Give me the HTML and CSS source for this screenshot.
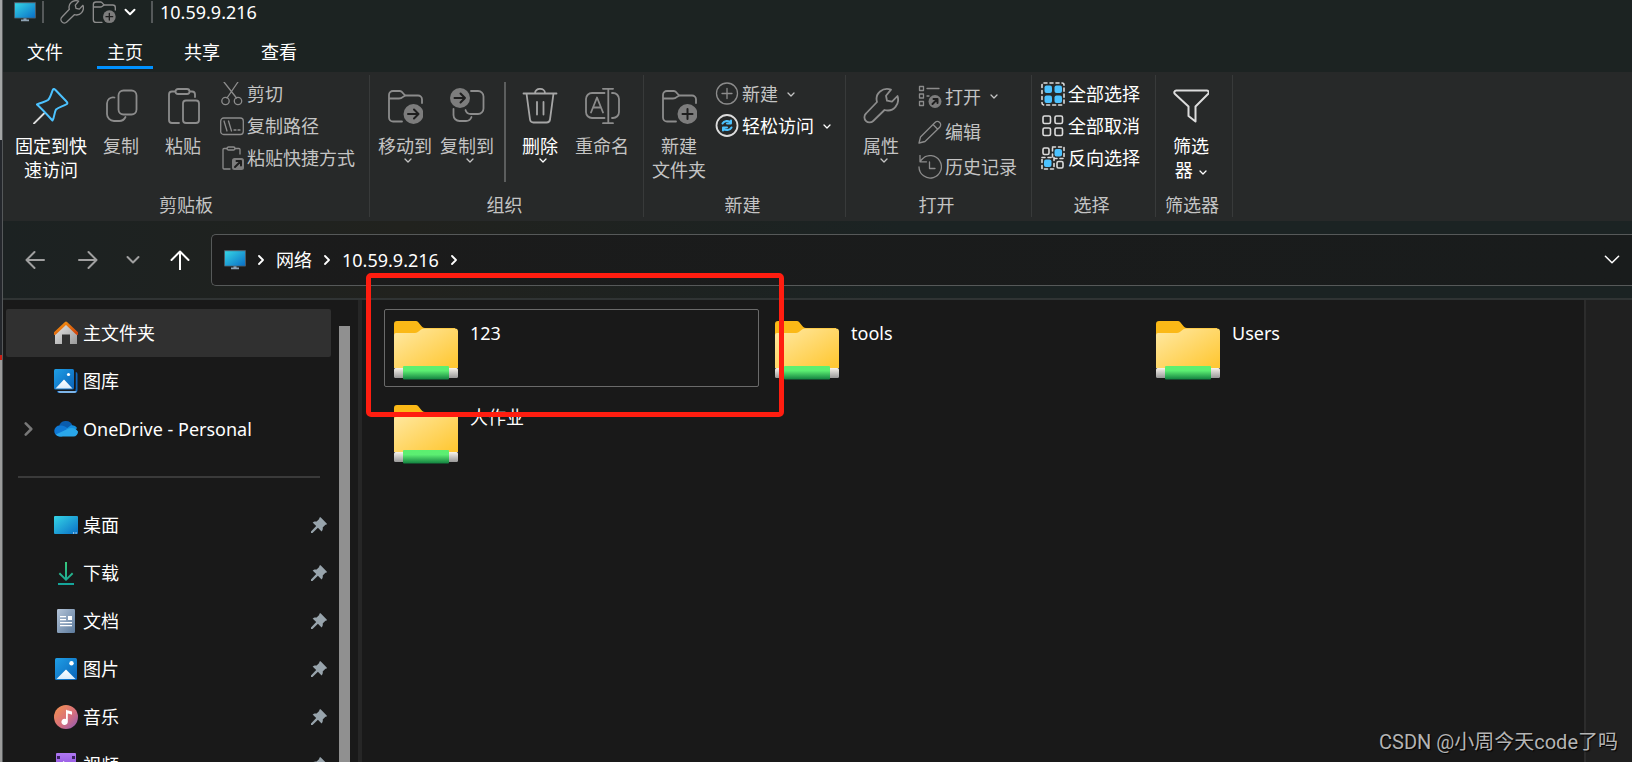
FILE: index.html
```html
<!DOCTYPE html>
<html lang="zh-CN">
<head>
<meta charset="utf-8">
<title>10.59.9.216</title>
<link rel="stylesheet" href="styles.css">
</head>
<body>
<svg class="sprite" width="0" height="0" aria-hidden="true">
  <defs>
    <linearGradient id="g-screen" x1="0" y1="0" x2="1" y2="1"><stop offset="0" stop-color="#35d5e6"/><stop offset="1" stop-color="#0a6fc6"/></linearGradient>
    <linearGradient id="g-folder" x1="0" y1="0" x2="1" y2="1"><stop offset="0" stop-color="#ffe9a4"/><stop offset="1" stop-color="#ffc62e"/></linearGradient>
    <linearGradient id="g-green" x1="0" y1="0" x2="0" y2="1"><stop offset="0" stop-color="#5cf070"/><stop offset=".35" stop-color="#5cee72"/><stop offset="1" stop-color="#128040"/></linearGradient>
    <linearGradient id="g-pipe" x1="0" y1="0" x2="0" y2="1"><stop offset="0" stop-color="#f8f4ec"/><stop offset="1" stop-color="#989898"/></linearGradient>
    <linearGradient id="g-roof" x1="0" y1="0" x2="1" y2="1"><stop offset="0" stop-color="#f59a12"/><stop offset="1" stop-color="#d2440c"/></linearGradient>
    <linearGradient id="g-wall" x1="0" y1="0" x2="1" y2="1"><stop offset="0" stop-color="#e8e8e8"/><stop offset="1" stop-color="#9a9a9a"/></linearGradient>
    <linearGradient id="g-pic" x1="0" y1="0" x2="1" y2="1"><stop offset="0" stop-color="#1f9fe6"/><stop offset="1" stop-color="#0a62b8"/></linearGradient>
    <linearGradient id="g-snow" x1="0" y1="0" x2="0" y2="1"><stop offset="0" stop-color="#ffffff"/><stop offset="1" stop-color="#d8ebfb"/></linearGradient>
    <linearGradient id="g-down" x1="0" y1="0" x2="0" y2="1"><stop offset="0" stop-color="#38c87c"/><stop offset="1" stop-color="#14a49c"/></linearGradient>
    <linearGradient id="g-doc" x1="0" y1="0" x2="1" y2="1"><stop offset="0" stop-color="#b4c4d8"/><stop offset="1" stop-color="#5c7a9c"/></linearGradient>
    <linearGradient id="g-music" x1="0" y1="0" x2="1" y2="1"><stop offset="0" stop-color="#f5944c"/><stop offset=".55" stop-color="#d8707c"/><stop offset="1" stop-color="#8c58b8"/></linearGradient>
    <linearGradient id="g-video" x1="0" y1="0" x2="0" y2="1"><stop offset="0" stop-color="#b078f4"/><stop offset="1" stop-color="#7c3cd0"/></linearGradient>
  </defs>
  <symbol id="monitor" viewBox="0 0 22 20"><path d="M7 17.500h8v1.800H7zM9.500 15.500h3v2.500h-3z" fill="#8fa3b4"/><rect width="22" height="16.500" rx="1" fill="#4a5a66"/><rect x="1" y="1.200" width="20" height="14.500" fill="url(#g-screen)"/></symbol>
  <symbol id="wrench" viewBox="0 0 36 36"><path d="M28 1.600C20-1 11.500 5 14 14L3 25.500a5 5 0 0 0 7.200 7.500L21.500 22C31 24.500 37 16 34.500 8L29 13.700l-5-1-1-5z"/></symbol>
  <symbol id="folder" viewBox="0 0 36 36"><path d="M15 33.500H6a4 4 0 0 1-4-4V7a4 4 0 0 1 4-4h7c3 0 3.500 4.500 6 4.500h12a4 4 0 0 1 4 4V15M2 10.500h10c4 0 4-3 7-3"/></symbol>
  <symbol id="chev" viewBox="0 0 8 5"><path d="M1 1l3 3 3-3"/></symbol>
  <symbol id="chev-right" viewBox="0 0 6 10"><path d="M1 1l4 4-4 4"/></symbol>
  <symbol id="pin" viewBox="0 0 16 16"><path d="M9.600.3L15.700 6.400c.5.900-.2 1.500-1.300 1.400l-2.700 2.700c.3 1.500 0 3-1.100 4L6.900 10.800 1.500 16 0 16l0-1.500L5.200 9.100 1.600 5.600C2.600 4.400 4.200 4.200 5.600 4.500l2.600-2.600C8.200.8 8.700-.2 9.600.3z" fill="#98a4ac"/></symbol>
  <symbol id="share-folder" viewBox="0 0 64 59"><path d="M0 3a3 3 0 0 1 3-3h19c3 0 5 7 9 7h30v8H0z" fill="#fbb917"/><path d="M0 14a2 2 0 0 1 2-2h19c4 0 5-4.500 9-4.500h31a3 3 0 0 1 3 3V47H0z" fill="url(#g-folder)"/><rect y="47" width="64" height="10" rx="1.500" fill="url(#g-pipe)"/><rect x="9" y="45" width="46" height="13.500" rx="1" fill="url(#g-green)"/></symbol>
</svg>

<div class="desktop">
<div class="backdrop"></div>
<main class="window">
  <header class="titlebar">
    <svg class="monitor"><use href="#monitor"/></svg>
    <span class="bar"></span>
    <button class="quick quick-first" aria-label="属性"><svg class="ico24 dim"><use href="#wrench"/></svg></button>
    <button class="quick" aria-label="新建文件夹"><svg class="ico24 dim" viewBox="0 0 36 36"><use href="#folder"/><circle cx="26" cy="25" r="9.500" class="badge"/><path d="M26 20v10M21 25h10" class="cut"/></svg></button>
    <button class="quick" aria-label="自定义"><svg class="chev-lg bright"><use href="#chev"/></svg></button>
    <span class="bar bar-last"></span>
    <h1 class="title">10.59.9.216</h1>
  </header>

  <nav class="tabs">
    <button class="tab tab-file">文件</button>
    <button class="tab tab-active">主页</button>
    <button class="tab">共享</button>
    <button class="tab">查看</button>
  </nav>

  <section class="ribbon">
    <div class="group group-clip">
      <div class="tools">
        <button class="big big-wide on">
          <svg class="ico36" viewBox="0 0 36 36"><path d="M1 35.500L11 25.500" stroke="#ddd"/><path d="M20 1.500c-1.500 3-2.500 8-5 10.500-3 2-7 2.500-11 4.500C9 21 14 26.500 19.500 32.500c2-3 1.500-7.500 3.500-11 3-2.500 6.500-3 11-5.500.8-1 .3-1.700-.5-2.500L22.500 2C21.500 1 20.600.6 20 1.500z" stroke="#4cc2ff" stroke-width="2"/></svg>
          <span>固定到快速访问</span></button>
        <button class="big">
          <svg class="ico36" viewBox="0 0 36 36"><rect x="15.500" y="2.500" width="18" height="24" rx="5"/><path d="M11.500 9.500a6 6 0 0 0-7.500 6V26a7 7 0 0 0 7 7h5a7 7 0 0 0 6.500-4"/></svg>
          <span>复制</span></button>
        <button class="big">
          <svg class="ico36" viewBox="0 0 36 36"><rect x="10.500" y="1" width="14" height="5" rx="2.500"/><path d="M10 3.500H7a3 3 0 0 0-3 3V32a3 3 0 0 0 3 3h7M25 3.500h2a3 3 0 0 1 3 3V9"/><rect x="18" y="12.500" width="16" height="22.500" rx="3"/></svg>
          <span>粘贴</span></button>
        <div class="stack">
          <button class="small"><svg class="ico24 thin" viewBox="0 0 24 24"><path d="M4 0l12.500 16M18 0L7 16"/><circle cx="5.500" cy="19" r="3.700"/><circle cx="18" cy="19" r="3.700"/></svg>剪切</button>
          <button class="small"><svg class="ico24 thin" viewBox="0 0 24 24"><rect x=".7" y="4" width="22.600" height="16.500" rx="3"/><path d="M4 7l3 10M8.500 7l3 10M14 16h2M18 16h2"/></svg>复制路径</button>
          <button class="small"><svg class="ico24 thin" viewBox="0 0 24 24"><rect x="7" y="1" width="8" height="3" rx="1.500"/><path d="M7 2.500H4a1 1 0 0 0-1 1V22a1 1 0 0 0 1 1h6M15 2.500h4a1 1 0 0 1 1 1V8"/><rect x="12" y="12" width="12" height="12" rx="2.500" class="badge"/><path d="M15 21l6-6M16.500 15H21v4.500" class="cut"/></svg>粘贴快捷方式</button>
        </div>
      </div>
      <h2 class="caption">剪贴板</h2>
    </div>

    <div class="group group-org">
      <div class="tools">
        <button class="big">
          <svg class="ico36" viewBox="0 0 36 36"><use href="#folder"/><circle cx="26.500" cy="26" r="10" class="badge"/><path d="M21 26h10.500M27 21.500l4.500 4.500-4.500 4.500" class="cut"/></svg>
          <span>移动到</span><svg class="chev"><use href="#chev"/></svg></button>
        <button class="big">
          <svg class="ico36" viewBox="0 0 36 36"><path d="M22 3h7a5.500 5.500 0 0 1 5.500 5.500v12A5.500 5.500 0 0 1 29 26h-7a5.500 5.500 0 0 1-5.500-4M4.500 21v6a6 6 0 0 0 6 6h6a6 6 0 0 0 6-4"/><circle cx="11" cy="10" r="10" class="badge"/><path d="M5.500 10H16M11.500 5.500L16 10l-4.500 4.500" class="cut"/></svg>
          <span>复制到</span><svg class="chev"><use href="#chev"/></svg></button>
        <span class="divider"></span>
        <button class="big on">
          <svg class="ico36 mid" viewBox="0 0 36 36"><path d="M1.500 5.500h33M13 5c0-5.500 10-5.500 10 0M4.500 5.500l3.500 26a3.500 3.500 0 0 0 3.500 3h13a3.500 3.500 0 0 0 3.500-3l3.500-26M15 14v12.500M21.500 14v12.500"/></svg>
          <span>删除</span><svg class="chev"><use href="#chev"/></svg></button>
        <button class="big">
          <svg class="ico36" viewBox="0 0 36 36"><path d="M20.500 5H8a6 6 0 0 0-6 6v13a6 6 0 0 0 6 6h12.500M28 5h1a6 6 0 0 1 6 6v13a6 6 0 0 1-6 6h-1M19 .8h10M19 35.200h10M24.300 1v34M7 24.500l6-15 6 15M9 19.500h8"/></svg>
          <span>重命名</span></button>
      </div>
      <h2 class="caption">组织</h2>
    </div>

    <div class="group group-new">
      <div class="tools">
        <button class="big">
          <svg class="ico36" viewBox="0 0 36 36"><use href="#folder"/><circle cx="26.500" cy="26" r="10" class="badge"/><path d="M26.500 21v10M21.500 26h10" class="cut"/></svg>
          <span>新建<br>文件夹</span></button>
        <div class="stack stack-near">
          <button class="small"><svg class="ico24 thin" viewBox="0 0 24 24"><circle cx="12" cy="11.500" r="10.500"/><path d="M12 6.500v10M7 11.500h10"/></svg>新建<svg class="chev"><use href="#chev"/></svg></button>
          <button class="small on"><svg class="ico24" viewBox="0 0 24 24"><circle cx="12" cy="11.500" r="10.500" stroke="#ddd"/><path d="M7.500 9.500c1.500-3 6-3.500 8.500-1V6.500M16 9.500h-4M16.500 13.500c-1.500 3-6 3.500-8.500 1v2M8 13.500h4" stroke="#4cc2ff" stroke-width="2"/></svg>轻松访问<svg class="chev"><use href="#chev"/></svg></button>
        </div>
      </div>
      <h2 class="caption">新建</h2>
    </div>

    <div class="group group-open">
      <div class="tools">
        <button class="big">
          <svg class="ico36"><use href="#wrench"/></svg>
          <span>属性</span><svg class="chev"><use href="#chev"/></svg></button>
        <div class="stack stack-loose">
          <button class="small"><svg class="ico24 thin" viewBox="0 0 24 24"><rect x="1.500" y="1.500" width="4" height="4"/><rect x="1.500" y="9" width="4" height="4"/><rect x="1.500" y="16.500" width="4" height="4"/><path d="M9 3.500h12M9 11h2"/><circle cx="17" cy="16.500" r="6.500" class="badge"/><path d="M14.500 19l5-5M15.500 14h4v4" class="cut"/></svg>打开<svg class="chev"><use href="#chev"/></svg></button>
          <button class="small"><svg class="ico24 thin" viewBox="0 0 24 24"><path d="M1 23l1.500-6L17 2.500a3.300 3.300 0 0 1 4.700 4.700L7 21.500zM15 4.500l4.700 4.700"/></svg>编辑</button>
          <button class="small"><svg class="ico24 thin" viewBox="0 0 24 24"><path d="M1 12a11.200 11.200 0 1 0 3-7.800L2 6.500M2 .5v6.300h6.500M11.500 7v6.500H17"/></svg>历史记录</button>
        </div>
      </div>
      <h2 class="caption">打开</h2>
    </div>

    <div class="group group-select">
      <div class="tools">
        <div class="stack stack-near">
          <button class="small on"><svg class="ico24" viewBox="0 0 24 24"><rect x="1" y="1" width="22" height="22" rx="2" class="dash"/><g class="blue"><rect x="3.500" y="3.500" width="7.500" height="7.500" rx="2"/><rect x="13.500" y="3.500" width="7.500" height="7.500" rx="2"/><rect x="3.500" y="13.500" width="7.500" height="7.500" rx="2"/><rect x="13.500" y="13.500" width="7.500" height="7.500" rx="2"/></g></svg>全部选择</button>
          <button class="small on"><svg class="ico24 light" viewBox="0 0 24 24"><rect x="2" y="2" width="7.500" height="7.500" rx="1.500"/><rect x="14" y="2" width="7.500" height="7.500" rx="1.500"/><rect x="2" y="14" width="7.500" height="7.500" rx="1.500"/><rect x="14" y="14" width="7.500" height="7.500" rx="1.500"/></svg>全部取消</button>
          <button class="small on"><svg class="ico24 light" viewBox="0 0 24 24"><rect x="2" y="2" width="6" height="6.500" rx="1.500"/><rect x="16" y="15.500" width="6" height="6.500" rx="1.500"/><path d="M11.500 1H23v11.500H11.500zM1 11.500h12V23H1z" class="dash"/><g class="blue"><rect x="13.500" y="3" width="7.500" height="7.500" rx="2"/><rect x="3" y="13.500" width="7.500" height="7.500" rx="2"/></g></svg>反向选择</button>
        </div>
      </div>
      <h2 class="caption">选择</h2>
    </div>

    <div class="group group-filter">
      <div class="tools">
        <button class="big on">
          <svg class="ico36 light" viewBox="0 0 36 36"><path d="M3.500 2.500h30a2 2 0 0 1 1.500 3.500L22.500 18.500v15l-7-5.500v-9.500L2 6a2 2 0 0 1 1.500-3.500z" stroke-width="2"/></svg>
          <span>筛选<br>器 <svg class="chev"><use href="#chev"/></svg></span></button>
      </div>
      <h2 class="caption">筛选器</h2>
    </div>
  </section>

  <div class="navbar">
    <button class="go" aria-label="后退"><svg class="ico20" viewBox="0 0 20 20"><path d="M19 10H2M9.500 2L1.500 10l8 8"/></svg></button>
    <button class="go" aria-label="前进"><svg class="ico20" viewBox="0 0 20 20"><path d="M1 10h17M10.500 2l8 8-8 8"/></svg></button>
    <button class="go go-narrow" aria-label="最近"><svg class="ico20" viewBox="0 0 20 20"><path d="M4.500 7l5.500 5.500L15.500 7"/></svg></button>
    <button class="go go-up" aria-label="向上"><svg class="ico20" viewBox="0 0 20 20"><path d="M10 20V1.500M1.500 10L10 1.500l8.500 8.500"/></svg></button>
    <div class="address">
      <svg class="monitor"><use href="#monitor"/></svg>
      <svg class="crumb-chev"><use href="#chev-right"/></svg>
      <a class="crumb" href="#">网络</a>
      <svg class="crumb-chev"><use href="#chev-right"/></svg>
      <a class="crumb" href="#">10.59.9.216</a>
      <svg class="crumb-chev"><use href="#chev-right"/></svg>
      <button class="history" aria-label="历史"><svg class="chev-xl"><use href="#chev"/></svg></button>
    </div>
  </div>

  <div class="content">
    <aside class="side">
      <nav class="tree">
        <a class="node node-active" href="#"><span class="twist"></span><svg class="ico24" viewBox="0 0 24 24"><path d="M1 11L12 2l11 9v12h-7v-9.500H8V23H1z" fill="url(#g-wall)" stroke="none"/><path d="M.8 12.500L12 2l11.200 10.500" stroke="url(#g-roof)" stroke-width="3"/></svg>主文件夹</a>
        <a class="node" href="#"><span class="twist"></span><svg class="ico24 flat" viewBox="0 0 24 24"><path d="M21.500 3a2 2 0 0 1 2 2v16a3 3 0 0 1-3 3H5a2 2 0 0 1-2-2h18.500z" fill="#0f66bc"/><path d="M4 22h18.500a2 2 0 0 1-2 2H6a2 2 0 0 1-2-2z" fill="#7db4e8"/><rect x="-1" y="-1" width="22.500" height="22.500" rx="2" fill="#191919"/><rect width="20" height="20.500" rx="1.500" fill="url(#g-pic)"/><path d="M1.500 19.500L10 10.500l8.500 9z" fill="url(#g-snow)"/><circle cx="14.500" cy="5.500" r="1.600" fill="#fff"/></svg>图库</a>
        <a class="node" href="#"><span class="twist"><svg class="twist-chev"><use href="#chev-right"/></svg></span><svg class="ico24 flat" viewBox="0 0 24 24"><path d="M5 10a7 7 0 0 1 13.500-1.500L14 15 4 13z" fill="#0a5cad"/><path d="M6 8.500c3-.5 5 .8 6.500 2l3 2L8 19.500H5.500a5.500 5.500 0 0 1 .5-11z" fill="#0f78d4"/><path d="M12 12l5-3.700c3-.3 5 1 6 2.700L19 16z" fill="#1490df"/><path d="M1.800 17.500L13 12.200c4-1.500 7.500-2 11 2.300a4.800 4.800 0 0 1-4.500 5H6a6 6 0 0 1-4.200-2z" fill="#2aa7ea"/></svg>OneDrive - Personal</a>
        <hr class="rule">
        <a class="node" href="#"><span class="twist"></span><svg class="ico24 flat" viewBox="0 0 24 24"><rect y="3" width="24" height="18" rx="1" fill="url(#g-screen)"/><path d="M19 19.500h1.200v1H19zM21.500 19.500h1.200v1h-1.200z" fill="#fff"/></svg>桌面<svg class="pin"><use href="#pin"/></svg></a>
        <a class="node" href="#"><span class="twist"></span><svg class="ico24" viewBox="0 0 24 24"><path d="M11 1h2v15.500l5-5 1.300 1.500L12 20l-7.300-7L6 11.500l5 5zM4 22h16v2H4z" fill="url(#g-down)" stroke="none"/></svg>下载<svg class="pin"><use href="#pin"/></svg></a>
        <a class="node" href="#"><span class="twist"></span><svg class="ico24 flat" viewBox="0 0 24 24"><rect x="3" width="18" height="24" rx="1.200" fill="url(#g-doc)"/><path d="M6 7h6v1.200H6zM6 10h6v1.200H6zM6 13h12v1.200H6zM6 16h12v1.200H6zM14 7h4v4h-4z" fill="#fff"/></svg>文档<svg class="pin"><use href="#pin"/></svg></a>
        <a class="node" href="#"><span class="twist"></span><svg class="ico24 flat" viewBox="0 0 24 24"><rect x="1" y="1" width="22" height="22" rx="1.500" fill="url(#g-pic)"/><path d="M2.500 22L12 12.500l9.500 9.500z" fill="url(#g-snow)"/><circle cx="17.500" cy="6.300" r="2.200" fill="#fff"/></svg>图片<svg class="pin"><use href="#pin"/></svg></a>
        <a class="node" href="#"><span class="twist"></span><svg class="ico24 flat" viewBox="0 0 24 24"><circle cx="12" cy="12" r="12" fill="url(#g-music)"/><path d="M12 4.500c1 1.300 3.500 1 6 2v3.200c-1.500-.5-3-.7-4.200-1.200V17a3.200 3.200 0 1 1-1.800-3z" fill="#fff"/></svg>音乐<svg class="pin"><use href="#pin"/></svg></a>
        <a class="node" href="#"><span class="twist"></span><svg class="ico24 flat" viewBox="0 0 24 24"><rect x="2" width="20" height="24" rx="1" fill="url(#g-video)"/><path d="M3 3h3v3H3zM3 9h3v3H3zM3 15h3v3H3zM18 3h3v3h-3zM18 9h3v3h-3zM18 15h3v3h-3z" fill="#3a2060"/><path d="M9 8l7 4-7 4z" fill="#fff"/></svg>视频<svg class="pin"><use href="#pin"/></svg></a>
      </nav>
      <div class="scroll"><div class="thumb"></div></div>
    </aside>
    <div class="splitter"></div>
    <section class="files">
      <a class="file file-focus" href="#"><svg class="folder"><use href="#share-folder"/></svg>123</a>
      <a class="file" href="#"><svg class="folder"><use href="#share-folder"/></svg>tools</a>
      <a class="file" href="#"><svg class="folder"><use href="#share-folder"/></svg>Users</a>
      <a class="file" href="#"><svg class="folder"><use href="#share-folder"/></svg>大作业</a>
      <div class="marker"></div>
    </section>
    <div class="preview"></div>
  </div>
</main>
<p class="watermark">CSDN @小周今天code了吗</p>
</div>
</body>
</html>
```
FILE: styles.css
```css
* { box-sizing: border-box; }

body {
  margin: 0;
  background: #191919;
  color: #fff;
  font: 18px/24px "Noto Sans", "Noto Sans CJK SC", sans-serif;
}

button {
  margin: 0;
  padding: 0;
  border: 0;
  background: none;
  color: inherit;
  font: inherit;
}

a { color: inherit; text-decoration: none; }
h1, h2, p { margin: 0; font: inherit; }

svg {
  flex: none;
  fill: none;
  stroke: #8c8c8c;
  stroke-width: 1.8;
  stroke-linecap: round;
  stroke-linejoin: round;
}

.sprite { position: absolute; }

.desktop {
  position: relative;
  display: flex;
  height: 100vh;
  overflow: hidden;
}

.backdrop {
  flex: none;
  width: 3px;
  border-right: 1px solid #55585a;
  background: linear-gradient(#a4a6a6 0 140px, #24272c 140px 355px, #c81e14 355px 360px, #9c9c9c 360px);
}

.window {
  display: flex;
  flex: 1;
  flex-direction: column;
  min-width: 0;
  background: #1c2322;
}

.ico36 { width: 36px; height: 36px; }
.ico24 { width: 24px; height: 24px; }
.ico20 { width: 20px; height: 20px; }
.thin { stroke-width: 1.3; }
.dim { stroke-width: 2; }
.mid { stroke: #a6a6a6; }
.light { stroke: #dcdcdc; stroke-width: 1.6; }
.bright { stroke: #fff; }
.flat { stroke: none; }
.badge { fill: #7d7d7d; stroke: none; }
.cut { stroke: #1e1e1e; stroke-width: 2; }
.dash { stroke: #ddd; stroke-width: 1.6; stroke-dasharray: 3 3; }
.blue { fill: #4cc2ff; stroke: none; }
.chev { width: 8px; height: 5px; stroke: #c4c4c4; stroke-width: 1.3; }
.chev-lg { width: 12px; height: 8px; stroke-width: 1.3; }
.chev-xl { width: 18px; height: 11px; stroke: #fff; stroke-width: .7; }
.monitor { width: 22px; height: 20px; stroke: none; }

/* Title bar */

.titlebar {
  display: flex;
  flex: none;
  align-items: center;
  height: 24px;
  padding-left: 11px;
}

.titlebar .monitor { margin-right: 6px; }
.bar { width: 2px; height: 22px; background: #55595a; }
.quick { display: flex; margin-right: 8px; }
.quick-first { margin-left: 16px; }
.bar-last { margin: 0 7px; }

/* Tabs */

.tabs {
  display: flex;
  flex: none;
  gap: 21px;
  height: 48px;
  padding: 15px 14px 3px;
}

.tab {
  width: 56px;
  border-bottom: 3px solid transparent;
  line-height: 27px;
}

.tab-file { margin-right: 3px; }
.tab-active { border-color: #0091ff; }

/* Ribbon */

.ribbon {
  display: flex;
  flex: none;
  padding: 3px 0 4px;
  background: #272929;
  color: #c4c4c4;
}

.group {
  display: flex;
  flex: none;
  flex-direction: column;
  border-right: 1px solid #383a3a;
}

.group-clip { width: 367px; }
.group-org { width: 274px; }
.group-new { width: 202px; }
.group-open { width: 186px; }
.group-select { width: 124px; }
.group-filter { width: 77px; }

.tools { display: flex; height: 118px; padding-left: 4px; }
.group-clip .tools { padding-left: 9px; }
.caption { padding-right: 4px; text-align: center; }
.group-clip .caption { padding: 0; }

.big {
  display: flex;
  flex: none;
  flex-direction: column;
  align-items: center;
  width: 62px;
  padding-top: 13px;
}

.big span { margin-top: 10px; }
.big > .chev { margin-left: 6px; }
.big-wide { width: 78px; padding-left: 3px; padding-right: 3px; }
.on { color: #fff; }
.on .chev { stroke: #fff; }
.big span .chev { margin-left: 2px; vertical-align: middle; }

.stack { padding-top: 3px; margin-left: 6px; }
.stack-near { margin-left: 5px; }

.small {
  display: flex;
  align-items: center;
  gap: 3px;
  height: 32px;
  white-space: nowrap;
}

.small .chev { margin-left: 6px; }
.stack-loose { padding-top: 4px; }
.stack-loose .small { height: 35px; }

.divider {
  width: 2px;
  height: 100px;
  margin: 7px 3px 0 6px;
  background: #5c5e5e;
}

/* Navigation */

.navbar {
  display: flex;
  flex: none;
  align-items: center;
  height: 79px;
  padding-left: 5px;
  border-bottom: 2px solid #303434;
  background: linear-gradient(90deg, #1c2222, #21221e 400px, #1b2323 900px);
}

.go { display: flex; justify-content: center; width: 53px; }
.go svg { stroke: #a0a0a0; stroke-width: 2; }
.go-narrow { width: 38px; }
.go-up { width: 55px; margin-right: 4px; }
.go-up svg { stroke: #fff; }

.address {
  display: flex;
  flex: 1;
  align-items: center;
  gap: 12px;
  height: 52px;
  padding: 0 11px 0 12px;
  border: 1px solid #565959;
  border-right: 0;
  border-radius: 5px 0 0 5px;
  background: linear-gradient(90deg, #1b1b1b, #191c1c);
}

.crumb-chev { width: 6px; height: 10px; stroke: #fff; stroke-width: 1.8; }
.history { display: flex; margin-left: auto; }

/* Content */

.content { display: flex; flex: 1; min-height: 0; background: #191919; }

.side { display: flex; flex: none; width: 355px; padding-left: 3px; }
.tree { flex: none; width: 325px; padding-top: 9px; }

.node {
  display: flex;
  align-items: center;
  height: 48px;
  padding-right: 4px;
  border-radius: 2px;
}

.node-active { background: #303030; }
.node > .ico24 { margin-right: 5px; }
.twist { width: 48px; padding-left: 18px; }
.twist-chev { display: block; width: 9px; height: 14px; stroke: #787878; }
.rule { height: 2px; margin: 23px 11px 23px 12px; border: 0; background: #3a3a3a; }
.node > .pin { width: 16px; height: 16px; margin-left: auto; stroke: none; }

.scroll { display: flex; margin-left: 8px; padding-top: 26px; }
.thumb { width: 11px; background: #909090; }
.splitter { flex: none; width: 4px; background: #262626; }

.files {
  position: relative;
  display: grid;
  flex: 1;
  grid-template-columns: repeat(3, 375px);
  grid-auto-rows: 78px;
  gap: 6px;
  padding: 9px 0 0 22px;
}

.file {
  display: flex;
  gap: 12px;
  padding: 11px 9px;
  border: 1px solid transparent;
  border-radius: 2px;
}

.file-focus { border-color: #6a6a6a; }
.folder { width: 64px; height: 59px; stroke: none; }

.marker {
  position: absolute;
  top: -27px;
  left: 4px;
  width: 418px;
  height: 144px;
  border: 5px solid #ff1d10;
  border-radius: 5px;
}

.preview { flex: none; width: 48px; border-left: 2px solid #2c2c2c; background: #202020; }

.watermark {
  position: absolute;
  right: 14px;
  bottom: 8px;
  color: #b4b4b4;
  font: 20px/24px Roboto, "Noto Sans CJK SC", sans-serif;
  text-shadow: 1px 1px 1px #000;
}
```
